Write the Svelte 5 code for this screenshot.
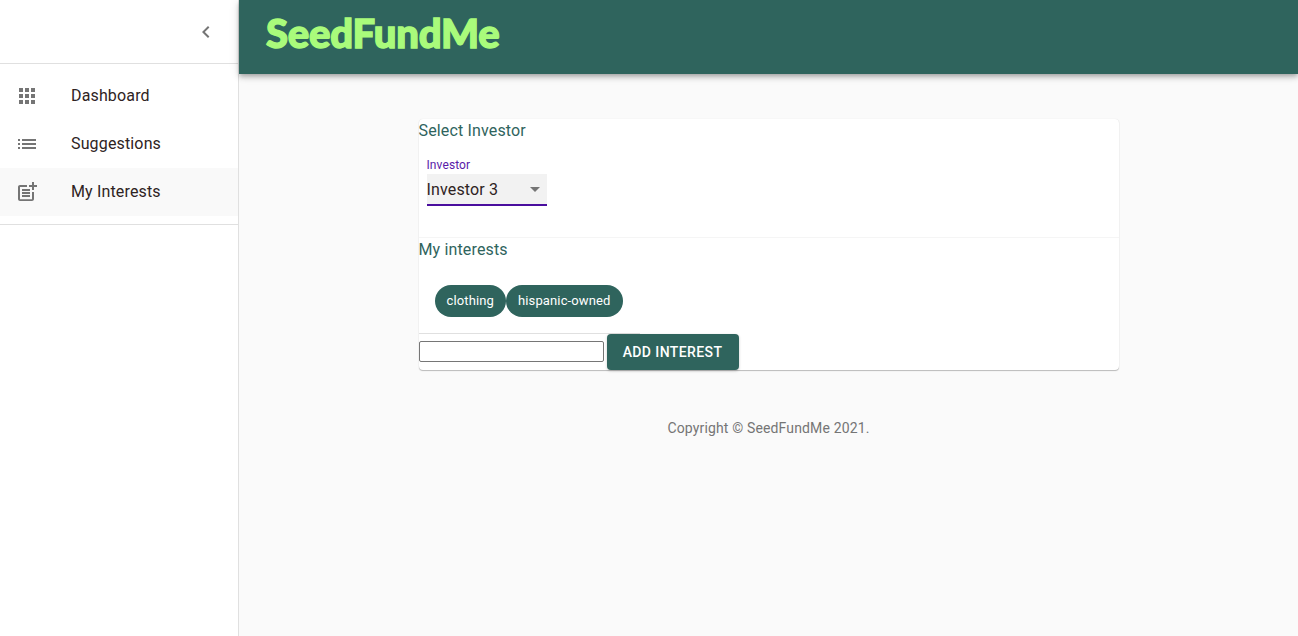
<script>
  const navItems = [
    { label: 'Dashboard', paths: ['M4 8h4V4H4v4zm6 12h4v-4h-4v4zm-6 0h4v-4H4v4zm0-6h4v-4H4v4zm6 0h4v-4h-4v4zm6-10v4h4V4h-4zm-6 4h4V4h-4v4zm6 6h4v-4h-4v4zm0 6h4v-4h-4v4z'] },
    { label: 'Suggestions', paths: ['M3 13h2v-2H3v2zm0 4h2v-2H3v2zm0-8h2V7H3v2zm4 4h14v-2H7v2zm0 4h14v-2H7v2zM7 7v2h14V7H7z'] },
    {
      label: 'My Interests',
      active: true,
      paths: [
        'M17 19.22H5V7h7V5H5c-1.1 0-2 .9-2 2v12c0 1.1.9 2 2 2h12c1.1 0 2-.9 2-2v-7h-2v7.22z',
        'M19 2h-2v3h-3c.01.01 0 2 0 2h3v2.99c.01.01 2 0 2 0V7h3V5h-3V2z',
        'M7 9h8v2H7zM7 12v2h8v-2h-3zM7 15h8v2H7z'
      ]
    }
  ];

  const interests = ['clothing', 'hispanic-owned'];
</script>

<div class="root">
  <aside class="drawer">
    <div class="drawer-head">
      <svg class="chevron" viewBox="0 0 24 24" width="24" height="24">
        <path d="M15.41 7.41L14 6l-6 6 6 6 1.41-1.41L10.83 12z" />
      </svg>
    </div>
    <nav class="nav">
      {#each navItems as item}
        <div class="nav-item" class:active={item.active}>
          <svg viewBox="0 0 24 24" width="24" height="24">
            {#each item.paths as d}
              <path {d} />
            {/each}
          </svg>
          <span>{item.label}</span>
        </div>
      {/each}
    </nav>
  </aside>

  <div class="page">
    <header class="appbar">
      <h1 class="logo">SeedFundMe</h1>
    </header>

    <main class="main">
      <section class="card">
        <div class="block investor">
          <h2>Select Investor</h2>
          <div class="field">
            <span class="field-label">Investor</span>
            <div class="select">
              <span>Investor 3</span>
              <svg viewBox="0 0 24 24" width="24" height="24"><path d="M7 10l5 5 5-5z" /></svg>
            </div>
          </div>
        </div>

        <div class="block interests">
          <h2>My interests</h2>
          <div class="chips">
            {#each interests as chip}
              <span class="chip">{chip}</span>
            {/each}
          </div>
        </div>

        <hr class="rule" />
        <div class="add-row">
          <input type="text" />
          <button type="button">Add interest</button>
        </div>
      </section>

      <p class="copyright">Copyright © SeedFundMe 2021.</p>
    </main>
  </div>
</div>

<style>
  :global(body) {
    margin: 0;
    font-family: Roboto, "Liberation Sans", sans-serif;
    background: #fafafa;
  }

  .root {
    display: flex;
    height: 636px;
    overflow: hidden;
  }

  .drawer {
    width: 238px;
    flex: none;
    background: #fff;
    border-right: 1px solid #e0e0e0;
  }

  .drawer-head {
    height: 63px;
    display: flex;
    align-items: center;
    justify-content: flex-end;
    padding-right: 20px;
    border-bottom: 1px solid #e0e0e0;
  }

  .chevron path {
    fill: #757575;
  }

  .nav {
    padding: 8px 0;
    border-bottom: 1px solid #e0e0e0;
  }

  .nav-item {
    height: 48px;
    display: flex;
    align-items: center;
    gap: 32px;
    padding-left: 15px;
    font-size: 16px;
    letter-spacing: 0.15px;
    color: #2e2323;
  }

  .nav-item span {
    margin-top: -2px;
  }

  .nav-item.active {
    background: #f9f9f9;
  }

  .nav-item path {
    fill: #757575;
  }

  .page {
    flex: 1;
    min-width: 0;
    display: flex;
    flex-direction: column;
  }

  .appbar {
    height: 74px;
    box-sizing: border-box;
    flex: none;
    display: flex;
    align-items: center;
    padding: 0 0 8px 27px;
    background: #2f645d;
    box-shadow: 0 2px 4px -1px rgba(0, 0, 0, 0.2), 0 4px 5px rgba(0, 0, 0, 0.14), 0 1px 10px rgba(0, 0, 0, 0.12);
  }

  .logo {
    margin: 0;
    font-family: Lato, sans-serif;
    font-weight: 900;
    font-size: 40px;
    line-height: 1;
    letter-spacing: -0.2px;
    color: #a9fb7b;
    -webkit-text-stroke: 1.4px #a9fb7b;
  }

  .main {
    flex: 1;
    display: flex;
    flex-direction: column;
    align-items: center;
    padding-top: 45px;
  }

  .card {
    width: 700px;
    background: #fff;
    border-radius: 4px;
    box-shadow: 0 1px 1px rgba(0, 0, 0, 0.25), 0 0 1px rgba(0, 0, 0, 0.12);
  }

  .block h2 {
    margin: 0;
    font-size: 16px;
    font-weight: 400;
    line-height: 24px;
    letter-spacing: 0.15px;
    color: #2f645d;
  }

  .investor {
    height: 118px;
    border-bottom: 1px solid #f5f5f5;
  }

  .field {
    width: 120px;
    margin: 15px 0 0 8px;
  }

  .field-label {
    display: block;
    font-size: 12px;
    line-height: 14px;
    letter-spacing: 0.1px;
    color: #5a1aa8;
  }

  .select {
    height: 30px;
    margin-top: 2px;
    display: flex;
    align-items: center;
    justify-content: space-between;
    background: #f2f2f2;
    border-bottom: 2px solid #4a0e9e;
    font-size: 16px;
    letter-spacing: 0.15px;
    color: #2e2323;
  }

  .select span {
    padding-top: 1px;
  }

  .select svg {
    flex: none;
  }

  .select path {
    fill: #757575;
  }

  .interests {
    height: 95px;
    box-sizing: border-box;
  }

  .chips {
    display: flex;
    margin: 23px 0 0 16px;
  }

  .chip {
    height: 30px;
    display: flex;
    align-items: center;
    padding: 0 12px 2px;
    border-radius: 16px;
    background: #2f645d;
    color: #fff;
    font-size: 13px;
    letter-spacing: 0.13px;
  }

  .rule {
    width: 221px;
    height: 1px;
    margin: 0;
    border: 0;
    background: #e0e0e0;
  }

  .add-row {
    display: flex;
    align-items: center;
    gap: 3px;
    height: 36px;
  }

  .add-row input {
    width: 185px;
    height: 21px;
    box-sizing: border-box;
    margin: 0 0 2px;
    padding: 1px 2px;
    border: 1px solid #767676;
    border-radius: 2px;
    background: #fff;
  }

  .add-row button {
    width: 132px;
    height: 36px;
    padding: 0;
    border: 0;
    border-radius: 4px;
    background: #2f645d;
    color: #fff;
    font-family: inherit;
    font-size: 14px;
    font-weight: 500;
    letter-spacing: 0.4px;
    text-transform: uppercase;
    box-shadow: 0 1px 3px rgba(0, 0, 0, 0.2);
  }

  .copyright {
    margin: 48px 0 0;
    font-size: 14px;
    line-height: 20px;
    letter-spacing: 0.15px;
    color: #757575;
  }
</style>
